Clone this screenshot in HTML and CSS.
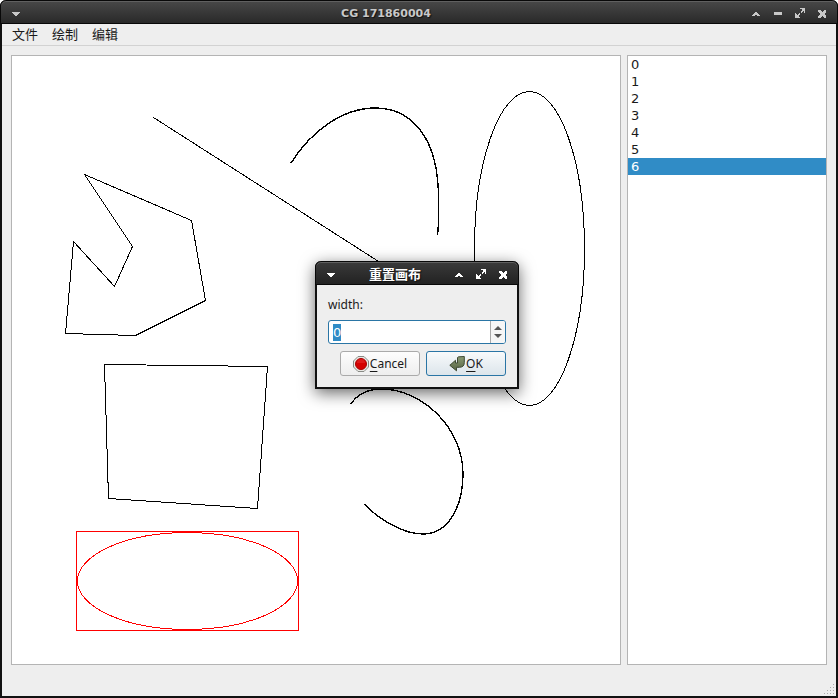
FILE: index.html
```html
<!DOCTYPE html>
<html lang="zh-CN">
<head>
<meta charset="utf-8">
<title>CG 171860004</title>
<link rel="stylesheet" href="styles.css">
</head>
<body>
<svg class="symbols" aria-hidden="true">
  <symbol id="down" viewBox="0 0 12 12"><path d="M2 4h8v1H9v1H8v1H7v1H5V7H4V6H3V5H2z"/></symbol>
  <symbol id="up" viewBox="0 0 12 12"><path d="M5 4h2v1h1v1h1v1h1v1H7V7H5v1H2V7h1V6h1V5h1z"/></symbol>
  <symbol id="min" viewBox="0 0 12 12"><path d="M2 4h8v3H2z"/></symbol>
  <symbol id="max" viewBox="0 0 12 12"><path d="M6 0h5v5h-1V4L9 3 7 5 6 4l2-2-1-1H6zM1 5h1v1l1 1 2-2 1 1-2 2 1 1h1v1H1z"/></symbol>
  <symbol id="close" viewBox="0 0 12 12"><path d="M2 2h2l2 2 2-2h2v2L8 6l2 2v2H8L6 8l-2 2H2V8l2-2-2-2z"/></symbol>
</svg>
<div class="window">
  <header class="titlebar">
    <button class="control" aria-label="Window menu"><svg><use href="#down"/></svg></button>
    <h1 class="title">CG 171860004</h1>
    <button class="control" aria-label="Shade"><svg><use href="#up"/></svg></button>
    <button class="control" aria-label="Minimize"><svg><use href="#min"/></svg></button>
    <button class="control" aria-label="Maximize"><svg><use href="#max"/></svg></button>
    <button class="control" aria-label="Close"><svg><use href="#close"/></svg></button>
  </header>
  <nav class="menubar">
    <button class="menu">文件</button>
    <button class="menu">绘制</button>
    <button class="menu">编辑</button>
  </nav>
  <main class="content">
    <svg class="canvas" role="img" aria-label="Canvas">
      <g class="shapes" transform="translate(-12 -56)">
        <path d="M153.500 117.500L400.500 275.500"/>
        <path d="M84.500 174.500L191.500 220.500 205.500 300.500 135.500 335.500 65.500 333.500 73.500 241.500 114.500 286.500 132.500 246.500z"/>
        <path d="M104.500 364.500L267.500 366.500 257.500 508.500 108.500 498.500z"/>
        <path class="curve" d="M291 163C312 130 343 108 375 108C412 108 439 138 438.500 200L438.500 224 437.500 235"/>
        <path class="curve" d="M351 404C358 393 370 389 382 389C420 389 463 426 463 474C463 507 448 534 423 534C404 534 381 521 364 504"/>
        <ellipse cx="529.500" cy="248.500" rx="55" ry="157"/>
        <g class="selected-shape">
          <rect x="76.500" y="531.500" width="222" height="99"/>
          <ellipse cx="187.500" cy="581" rx="110" ry="48.500"/>
        </g>
      </g>
    </svg>
    <ul class="items">
      <li>0</li><li>1</li><li>2</li><li>3</li><li>4</li><li>5</li><li class="current">6</li>
    </ul>
  </main>
  <footer class="statusbar">
    <svg class="grip" viewBox="0 0 11 11"><path d="M9 0h1v1H9zM6 3h1v1H6zM9 3h1v1H9zM3 6h1v1H3zM6 6h1v1H6zM9 6h1v1H9zM0 9h1v1H0zM3 9h1v1H3zM6 9h1v1H6zM9 9h1v1H9z"/></svg>
  </footer>
</div>

<section class="dialog" role="dialog" aria-labelledby="dialog-title">
  <header class="titlebar active">
    <button class="control" aria-label="Window menu"><svg><use href="#down"/></svg></button>
    <h2 class="title" id="dialog-title">重置画布</h2>
    <button class="control" aria-label="Shade"><svg><use href="#up"/></svg></button>
    <button class="control" aria-label="Maximize"><svg><use href="#max"/></svg></button>
    <button class="control" aria-label="Close"><svg><use href="#close"/></svg></button>
  </header>
  <form class="form">
    <label class="label" for="width">width:</label>
    <div class="spinbox">
      <input id="width" type="text" inputmode="numeric" value="0">
      <div class="steps">
        <button type="button" aria-label="Increase"><svg viewBox="0 0 8 4"><path d="M0 4L4 0 8 4z"/></svg></button>
        <button type="button" aria-label="Decrease"><svg viewBox="0 0 8 4"><path d="M0 0h8L4 4z"/></svg></button>
      </div>
    </div>
    <div class="actions">
      <button class="button" type="button">
        <svg viewBox="0 0 16 16"><path d="M5 .5h6L15.500 5v6L11 15.500H5L.5 11V5z" fill="#e8e8e4" stroke="#888a85"/><circle cx="8" cy="8" r="5.500" fill="#d40000" stroke="#a80000"/><path d="M4 7a4 4 0 0 1 8 0z" fill="#e83030" opacity=".5"/></svg>
        <span><u>C</u>ancel</span>
      </button>
      <button class="button default" type="button">
        <svg viewBox="0 0 16 16"><defs><linearGradient id="leaf" x2="0" y2="1"><stop stop-color="#8b9b74"/><stop offset="1" stop-color="#566443"/></linearGradient></defs><path d="M8.500 1.500Q9 .8 10 .8L15.300.5v6q0 4.800-5 4.800H7.500v3.500L.8 9.300 6.500 4.300V7h2z" fill="url(#leaf)" stroke="#3e4933"/></svg>
        <span><u>O</u>K</span>
      </button>
    </div>
  </form>
</section>
<script src="script.js"></script>
</body>
</html>
```
FILE: styles.css
```css
* { box-sizing: border-box; }
html, body { height: 100%; }
body {
  margin: 0;
  background: #fff;
  color: #1a1a1a;
  font: 13px/17px "Liberation Sans", "Noto Sans CJK SC", sans-serif;
}
button { margin: 0; padding: 0; border: 0; background: none; color: inherit; font: inherit; }
svg { display: block; }
.symbols { position: absolute; width: 0; height: 0; }

.window {
  display: flex;
  flex-direction: column;
  min-height: 100%;
  border: solid #111;
  border-width: 0 2px 2px;
  border-radius: 6px 6px 0 0;
  background: #eee;
}
.titlebar {
  display: flex;
  align-items: center;
  height: 24px;
  margin: 0 -2px;
  padding: 4px 4px 0;
  border: 1px solid #080808;
  border-radius: 6px 6px 0 0;
  background: linear-gradient(#484848, #292929);
  box-shadow: inset 0 1px #606060;
  color: #c8c8c8;
}
.title {
  flex: 1;
  margin: 0;
  text-align: center;
  font: bold 11px/18px "DejaVu Sans", "Noto Sans CJK SC", sans-serif;
  text-shadow: 1px 1px 1px #111;
}
.control { padding: 0 5px; }
.control svg { width: 12px; height: 12px; fill: currentColor; shape-rendering: crispEdges; }

.menubar {
  display: flex;
  gap: 14px;
  height: 22px;
  padding: 0 10px;
  border-bottom: 1px solid #d2d2d2;
}
.content {
  display: grid;
  grid-template-columns: 1fr 200px;
  gap: 6px;
  flex: 1;
  padding: 9px 9px 0;
}
.canvas, .items { width: 100%; height: 100%; border: 1px solid #b4b4b4; background: #fff; }
.shapes { fill: none; stroke: #000; shape-rendering: crispEdges; }
.curve { stroke-width: 1.4px; }
.selected-shape { stroke: #f00; }
.items { margin: 0; padding: 0; list-style: none; font: 13px/17px "DejaVu Sans", sans-serif; }
.items li { padding: 0 3px; }
.items .current { background: #308cc6; color: #fff; }
.statusbar { display: flex; align-items: flex-end; justify-content: flex-end; height: 31px; padding: 1px; }
.grip { width: 11px; height: 11px; fill: #aaa; }

.dialog {
  position: absolute;
  left: 315px;
  top: 261px;
  width: 204px;
  border: solid #111;
  border-width: 0 2px 2px;
  border-radius: 6px 6px 0 0;
  background: #eee;
  box-shadow: 0 4px 16px rgba(0, 0, 0, .6);
  font: 12px/17px "Noto Sans", sans-serif;
}
.titlebar.active { background: linear-gradient(#3a3a3a, #222); color: #fff; }
.active .title { font-size: 13px; }
.form { padding: 11px; }
.label { display: block; margin-bottom: 7px; }
.spinbox {
  display: flex;
  height: 24px;
  margin-bottom: 7px;
  border: 1px solid #2a75a5;
  border-radius: 3px;
  background: #fff;
}
.spinbox input {
  flex: 1;
  min-width: 0;
  padding: 0 4px;
  border: 0;
  outline: 0;
  background: none;
  font: 13px/17px "DejaVu Sans", sans-serif;
}
.spinbox input::selection { background: #308cc6; color: #fff; }
.steps {
  display: grid;
  width: 15px;
  padding: 3px 0;
  border-left: 1px solid #aaa;
  border-radius: 0 2px 2px 0;
  background: #f6f6f6;
}
.steps button { display: grid; place-items: center; }
.steps svg { width: 8px; height: 4px; fill: #555; }
.actions { display: flex; justify-content: flex-end; gap: 6px; }
.button {
  display: flex;
  align-items: center;
  justify-content: center;
  gap: 1px;
  width: 80px;
  height: 25px;
  border: 1px solid #aaa;
  border-radius: 3px;
  background: linear-gradient(#fdfdfd, #eee);
}
.button.default { border-color: #2a75a5; background: linear-gradient(#f8fafb, #dce5eb); }
.button svg { width: 16px; height: 16px; }
.button u { text-underline-offset: 3px; }
```
FILE: script.js
```js
const field = document.getElementById("width");
field.focus();
field.select();
```
